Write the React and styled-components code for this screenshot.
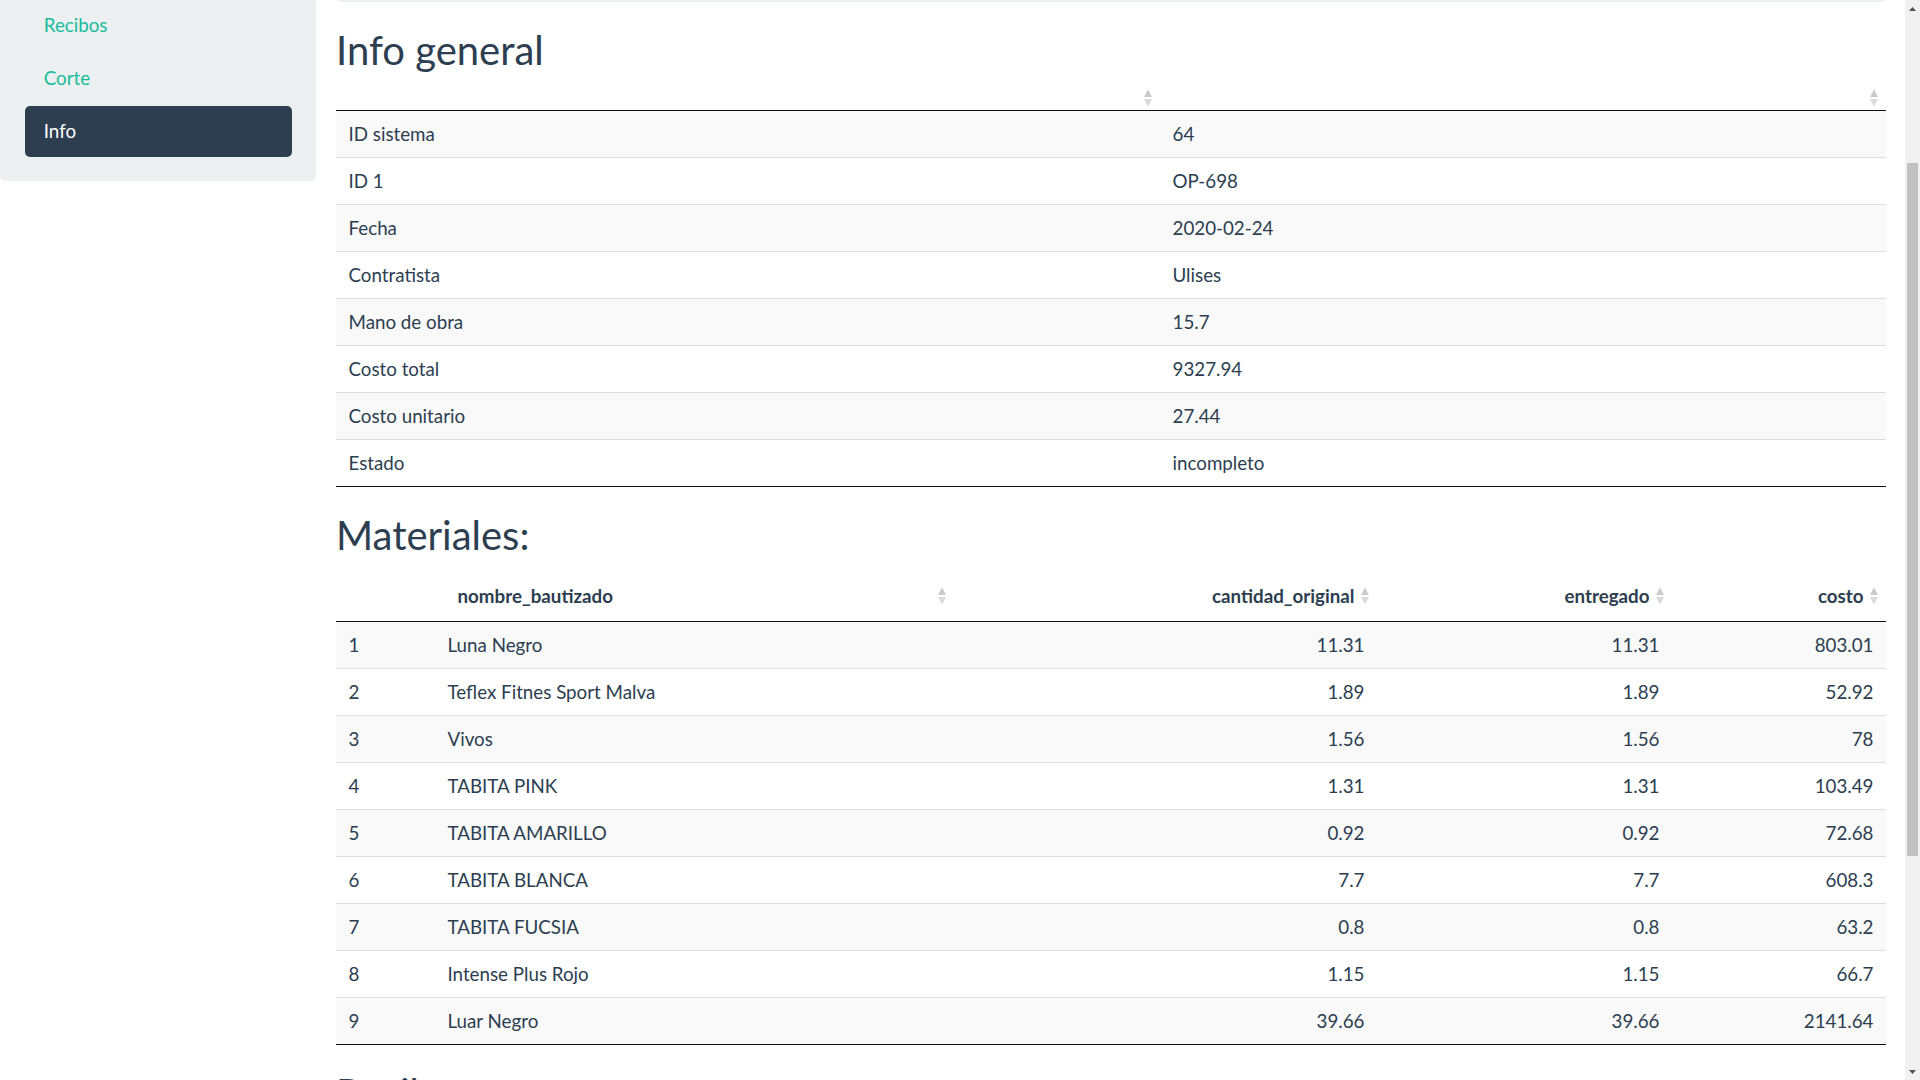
import React, { useLayoutEffect, useRef, useState } from "react";
import styled, { createGlobalStyle } from "styled-components";

const GlobalStyle = createGlobalStyle`
  body {
    margin: 0;
    font-family: Lato, "Open Sans", sans-serif;
    font-size: 18.75px;
    line-height: 1.428571;
    color: #2c3e50;
    background: #fff;
  }
  * {
    box-sizing: border-box;
  }
`;

const Page = styled.div`
  display: flex;
  align-items: flex-start;
  gap: 20px;
  padding: 45px 34px 173px 0;
`;

const Sidebar = styled.nav`
  width: 316px;
  flex-shrink: 0;
  display: flex;
  flex-direction: column;
  gap: 2px;
  padding: 23.75px 24px 24px 25px;
  background: #ecf0f1;
  border-radius: 5px;
`;

const NavItem = styled.a`
  display: block;
  padding: 12.5px 18.75px;
  line-height: 26px;
  border-radius: 5px;
  color: ${(p) => (p.$active ? "#ffffff" : "#18bc9c")};
  background: ${(p) => (p.$active ? "#2c3e50" : "transparent")};
  text-decoration: none;
  cursor: pointer;
`;

const Main = styled.main`
  flex: 1;
  min-width: 0;
`;

const Well = styled.div`
  height: 185px;
  padding: 23.75px;
  background: #ecf0f1;
  border-radius: 5px;
`;

const Label = styled.label`
  display: block;
  font-weight: 700;
  margin-bottom: 6px;
`;

const Select = styled.div`
  height: 56px;
  padding: 12px 15px;
  background: #fff;
  border: 1px solid #dce4ec;
  border-radius: 5px;
`;

const Heading = styled.h2`
  margin: 26px 0 13px;
  font-size: 40px;
  font-weight: 400;
  line-height: 1.1;
`;

const Table = styled.table`
  width: 100%;
  table-layout: fixed;
  border-collapse: separate;
  border-spacing: 0;
  border-bottom: 1px solid #111;
  margin-bottom: 2px;

  tbody tr + tr td {
    border-top: 1px solid #ddd;
  }
`;

const Th = styled.th`
  position: relative;
  padding: 12.5px 22.5px;
  line-height: 26px;
  font-weight: 700;
  text-align: ${(p) => (p.$right ? "right" : "left")};
  border-bottom: 1px solid #111;
  white-space: nowrap;
`;

const Row = styled.tr`
  background: ${(p) => (p.$odd ? "#f9f9f9" : "#ffffff")};
`;

const Td = styled.td`
  padding: 10px 12.5px;
  line-height: 26px;
  text-align: ${(p) => (p.$right ? "right" : p.$center ? "center" : "left")};
  white-space: nowrap;
`;

const SortBox = styled.span`
  position: absolute;
  right: 8px;
  top: 50%;
  transform: translateY(-50%);
  display: flex;
`;

const SortIcon = () => (
  <SortBox>
    <svg width="8" height="19" viewBox="0 0 8 19">
      <path d="M4 1 L8 8.5 L0 8.5 Z" fill="#cacaca" />
      <path d="M0 10.5 L8 10.5 L4 18 Z" fill="#dadada" />
    </svg>
  </SortBox>
);

/* window scrollbar, drawn over the right edge */
const ScrollBar = styled.div`
  position: fixed;
  top: 0;
  right: 0;
  bottom: 0;
  width: 15px;
  display: flex;
  flex-direction: column;
  background: #f1f1f1;
`;

const ScrollArrow = styled.div`
  height: 17px;
  flex-shrink: 0;
  display: flex;
  align-items: center;
  justify-content: center;
`;

const ScrollRail = styled.div`
  flex: 1;
  position: relative;
`;

const Thumb = styled.div`
  position: absolute;
  left: 2px;
  right: 2px;
  background: #c1c1c1;
`;

const Arrow = ({ down }) => (
  <svg width="7" height="4" viewBox="0 0 7 4">
    <path d={down ? "M0 0 L7 0 L3.5 4 Z" : "M0 4 L7 4 L3.5 0 Z"} fill="#505050" />
  </svg>
);

const info = [
  ["ID sistema", "64"],
  ["ID 1", "OP-698"],
  ["Fecha", "2020-02-24"],
  ["Contratista", "Ulises"],
  ["Mano de obra", "15.7"],
  ["Costo total", "9327.94"],
  ["Costo unitario", "27.44"],
  ["Estado", "incompleto"],
];

const materiales = [
  ["Luna Negro", "11.31", "11.31", "803.01"],
  ["Teflex Fitnes Sport Malva", "1.89", "1.89", "52.92"],
  ["Vivos", "1.56", "1.56", "78"],
  ["TABITA PINK", "1.31", "1.31", "103.49"],
  ["TABITA AMARILLO", "0.92", "0.92", "72.68"],
  ["TABITA BLANCA", "7.7", "7.7", "608.3"],
  ["TABITA FUCSIA", "0.8", "0.8", "63.2"],
  ["Intense Plus Rojo", "1.15", "1.15", "66.7"],
  ["Luar Negro", "39.66", "39.66", "2141.64"],
];

const navItems = ["Órdenes", "Nueva orden", "Materiales", "Recibos", "Corte", "Info"];

export default function App() {
  const infoRef = useRef(null);
  const [thumb, setThumb] = useState({ top: 0, height: 0 });

  // the view sits scrolled so that "Info general" is near the top
  useLayoutEffect(() => {
    const el = infoRef.current;
    if (!el) return;
    const top = el.getBoundingClientRect().top + window.scrollY;
    window.scrollTo(0, top - 28);

    const docH = document.documentElement.scrollHeight;
    const viewH = window.innerHeight;
    const rail = viewH - 34;
    setThumb({
      top: (window.scrollY / docH) * rail,
      height: (viewH / docH) * rail,
    });
  }, []);

  return (
    <>
      <GlobalStyle />
      <Page>
        <Sidebar>
          {navItems.map((n) => (
            <NavItem key={n} $active={n === "Info"}>
              {n}
            </NavItem>
          ))}
        </Sidebar>
        <Main>
          <Well>
            <Label>Orden</Label>
            <Select>OP-698</Select>
          </Well>

          <Heading ref={infoRef}>Info general</Heading>
          <Table>
            <colgroup>
              <col style={{ width: "824px" }} />
              <col />
            </colgroup>
            <thead>
              <tr>
                <Th>
                  <SortIcon />
                </Th>
                <Th>
                  <SortIcon />
                </Th>
              </tr>
            </thead>
            <tbody>
              {info.map(([k, v], i) => (
                <Row key={k} $odd={i % 2 === 0}>
                  <Td>{k}</Td>
                  <Td>{v}</Td>
                </Row>
              ))}
            </tbody>
          </Table>

          <Heading>Materiales:</Heading>
          <Table>
            <colgroup>
              <col style={{ width: "99px" }} />
              <col style={{ width: "519px" }} />
              <col style={{ width: "423px" }} />
              <col style={{ width: "295px" }} />
              <col />
            </colgroup>
            <thead>
              <tr>
                <Th />
                <Th>
                  nombre_bautizado
                  <SortIcon />
                </Th>
                <Th $right>
                  cantidad_original
                  <SortIcon />
                </Th>
                <Th $right>
                  entregado
                  <SortIcon />
                </Th>
                <Th $right>
                  costo
                  <SortIcon />
                </Th>
              </tr>
            </thead>
            <tbody>
              {materiales.map(([name, cant, ent, costo], i) => (
                <Row key={name} $odd={i % 2 === 0}>
                  <Td>{i + 1}</Td>
                  <Td>{name}</Td>
                  <Td $right>{cant}</Td>
                  <Td $right>{ent}</Td>
                  <Td $right>{costo}</Td>
                </Row>
              ))}
            </tbody>
          </Table>

          <Heading>Recibos:</Heading>
          <Table>
            <thead>
              <tr>
                <Th>
                  recibo
                  <SortIcon />
                </Th>
              </tr>
            </thead>
            <tbody>
              <Row $odd>
                <Td $center>No data available in table</Td>
              </Row>
            </tbody>
          </Table>
        </Main>
      </Page>

      <ScrollBar>
        <ScrollArrow>
          <Arrow />
        </ScrollArrow>
        <ScrollRail>
          <Thumb style={{ top: thumb.top, height: thumb.height }} />
        </ScrollRail>
        <ScrollArrow>
          <Arrow down />
        </ScrollArrow>
      </ScrollBar>
    </>
  );
}
